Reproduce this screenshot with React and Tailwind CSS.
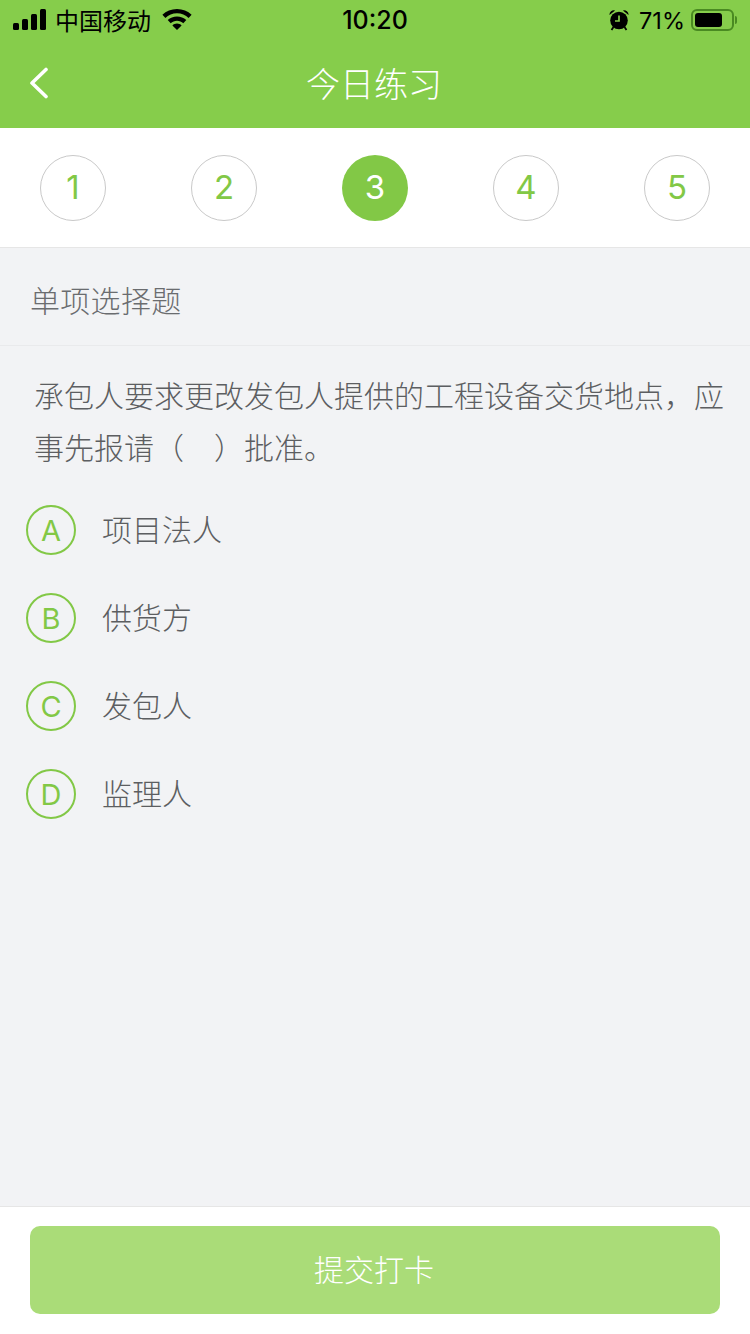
const latin = { fontFamily: 'Inter, "Liberation Sans", sans-serif' };
function Signal() {
  return (
    <svg width="34" height="22" viewBox="0 0 34 22" fill="#000">
      <rect x="0" y="14" width="6" height="7" rx="1.5" />
      <rect x="9" y="10" width="6" height="11" rx="1.5" />
      <rect x="18" y="5" width="6" height="16" rx="1.5" />
      <rect x="27" y="0" width="6" height="21" rx="1.5" />
    </svg>
  );
}
function Wifi() {
  return (
    <svg width="30" height="22" viewBox="0 0 30 22" fill="#000">
      <path d="M15 0C9.3 0 4.2 2.2.4 5.8l3 3.1C6.4 6 10.5 4.3 15 4.3s8.6 1.7 11.6 4.6l3-3.1C25.8 2.2 20.7 0 15 0z" />
      <path d="M15 7.5c-3.6 0-6.8 1.4-9.3 3.6l3 3.1c1.7-1.5 3.9-2.5 6.3-2.5s4.6 1 6.3 2.5l3-3.1C21.8 8.9 18.6 7.5 15 7.5z" />
      <path d="M15 14.6c-1.8 0-3.4.7-4.6 1.8L15 21l4.6-4.6c-1.2-1.1-2.8-1.8-4.6-1.8z" />
    </svg>
  );
}
function Alarm() {
  return (
    <svg width="20" height="22" viewBox="0 0 20 22" fill="#000">
      <circle cx="10" cy="11.5" r="8.8" />
      <path d="M0.5 6a4.2 4.2 0 0 1 5.6-4.4zM19.5 6a4.2 4.2 0 0 0-5.6-4.4z" />
      <path d="M4.5 18l-2 3M15.5 18l2 3" stroke="#000" strokeWidth="1.8" />
      <path d="M10 6.5v5.5H6" stroke="#86cd4b" strokeWidth="1.7" fill="none" />
    </svg>
  );
}
function Battery() {
  return (
    <div className="flex items-center">
      <div className="w-[43px] h-[22px] rounded-[6px] border-2 border-[#4a8a22] p-[2px] flex">
        <div className="w-[27px] h-full rounded-[3px] bg-black" />
      </div>
      <div className="w-[2px] h-[8px] ml-[1px] rounded-r-full bg-[#4a8a22]" />
    </div>
  );
}
function Step({ n, active }) {
  return (
    <div
      style={latin}
      className={
        active
          ? "w-[66px] h-[66px] rounded-full bg-[#82c846] text-white flex items-center justify-center text-[33px]"
          : "w-[66px] h-[66px] rounded-full border border-[#c9c9c9] text-[#82c846] flex items-center justify-center text-[33px]"
      }
    >
      {n}
    </div>
  );
}
function Option({ letter, text }) {
  return (
    <div className="flex items-center h-[50px] pl-[26px]">
      <div
        style={latin}
        className="w-[50px] h-[50px] rounded-full border-2 border-[#82c846] text-[#82c846] flex items-center justify-center text-[29px]"
      >
        <span className="pt-[1px]">{letter}</span>
      </div>
      <div className="ml-[26px] pb-[3px] text-[30px] font-light text-[#5c5e61]">{text}</div>
    </div>
  );
}
export default function App() {
  return (
    <div
      className="w-[750px] h-[1334px] flex flex-col bg-[#f2f3f5] overflow-hidden"
      style={{ fontFamily: '"Noto Sans CJK SC", Inter, "Liberation Sans", sans-serif' }}
    >
      <div className="h-[128px] shrink-0 bg-[#86cd4b] flex flex-col">
        <div className="h-[40px] px-[13px] relative flex items-center justify-between text-black">
          <div className="flex items-center">
            <Signal />
            <span className="ml-[8px] text-[24px] leading-none">中国移动</span>
            <span className="ml-[11px]"><Wifi /></span>
          </div>
          <div
            className="absolute left-0 right-0 text-center text-[25px] font-medium leading-none pointer-events-none"
            style={latin}
          >
            10:20
          </div>
          <div className="flex items-center" style={latin}>
            <Alarm />
            <span className="ml-[10px] pt-[2px] text-[23.5px] leading-none">71%</span>
            <span className="ml-[6px]"><Battery /></span>
          </div>
        </div>
        <div className="flex-1 relative flex items-center justify-center pb-[2px]">
          <svg className="absolute left-[28px] top-[27px]" width="22" height="32" viewBox="0 0 22 32" fill="none">
            <path d="M18 2.5L4 16l14 13.5" stroke="#fff" strokeWidth="3.6" strokeLinecap="round" strokeLinejoin="round" />
          </svg>
          <span className="text-[34px] font-light text-white leading-none pr-[2px]">今日练习</span>
        </div>
      </div>

      <div className="h-[120px] shrink-0 bg-white border-b border-[#e6e6e6] flex items-center justify-between px-[40px] pt-[1px]">
        <Step n="1" />
        <Step n="2" />
        <Step n="3" active />
        <Step n="4" />
        <Step n="5" />
      </div>

      <div className="h-[98px] shrink-0 border-b border-[#e9eaec] flex items-center pl-[30px] pt-[6px] text-[30px] tracking-[0.3px] font-light text-[#6a6c6f]">
        单项选择题
      </div>

      <div className="flex-1 min-h-0">
        <div className="pt-[22px] pl-[34px] pr-[20px] text-[30px] font-light leading-[52px] text-[#5c5e61]">
          承包人要求更改发包人提供的工程设备交货地点，应事先报请（<span className="inline-block w-[30px]" />）批准。
        </div>
        <div className="mt-[33px] flex flex-col gap-[38px]">
          <Option letter="A" text="项目法人" />
          <Option letter="B" text="供货方" />
          <Option letter="C" text="发包人" />
          <Option letter="D" text="监理人" />
        </div>
      </div>

      <div className="h-[128px] shrink-0 bg-white border-t border-[#e6e6e6] px-[30px] pt-[19px]">
        <div className="h-[88px] rounded-[10px] bg-[#aadc78] flex items-center justify-center text-[30px] font-light text-white pb-[4px] pr-[2px]">
          提交打卡
        </div>
      </div>
    </div>
  );
}
